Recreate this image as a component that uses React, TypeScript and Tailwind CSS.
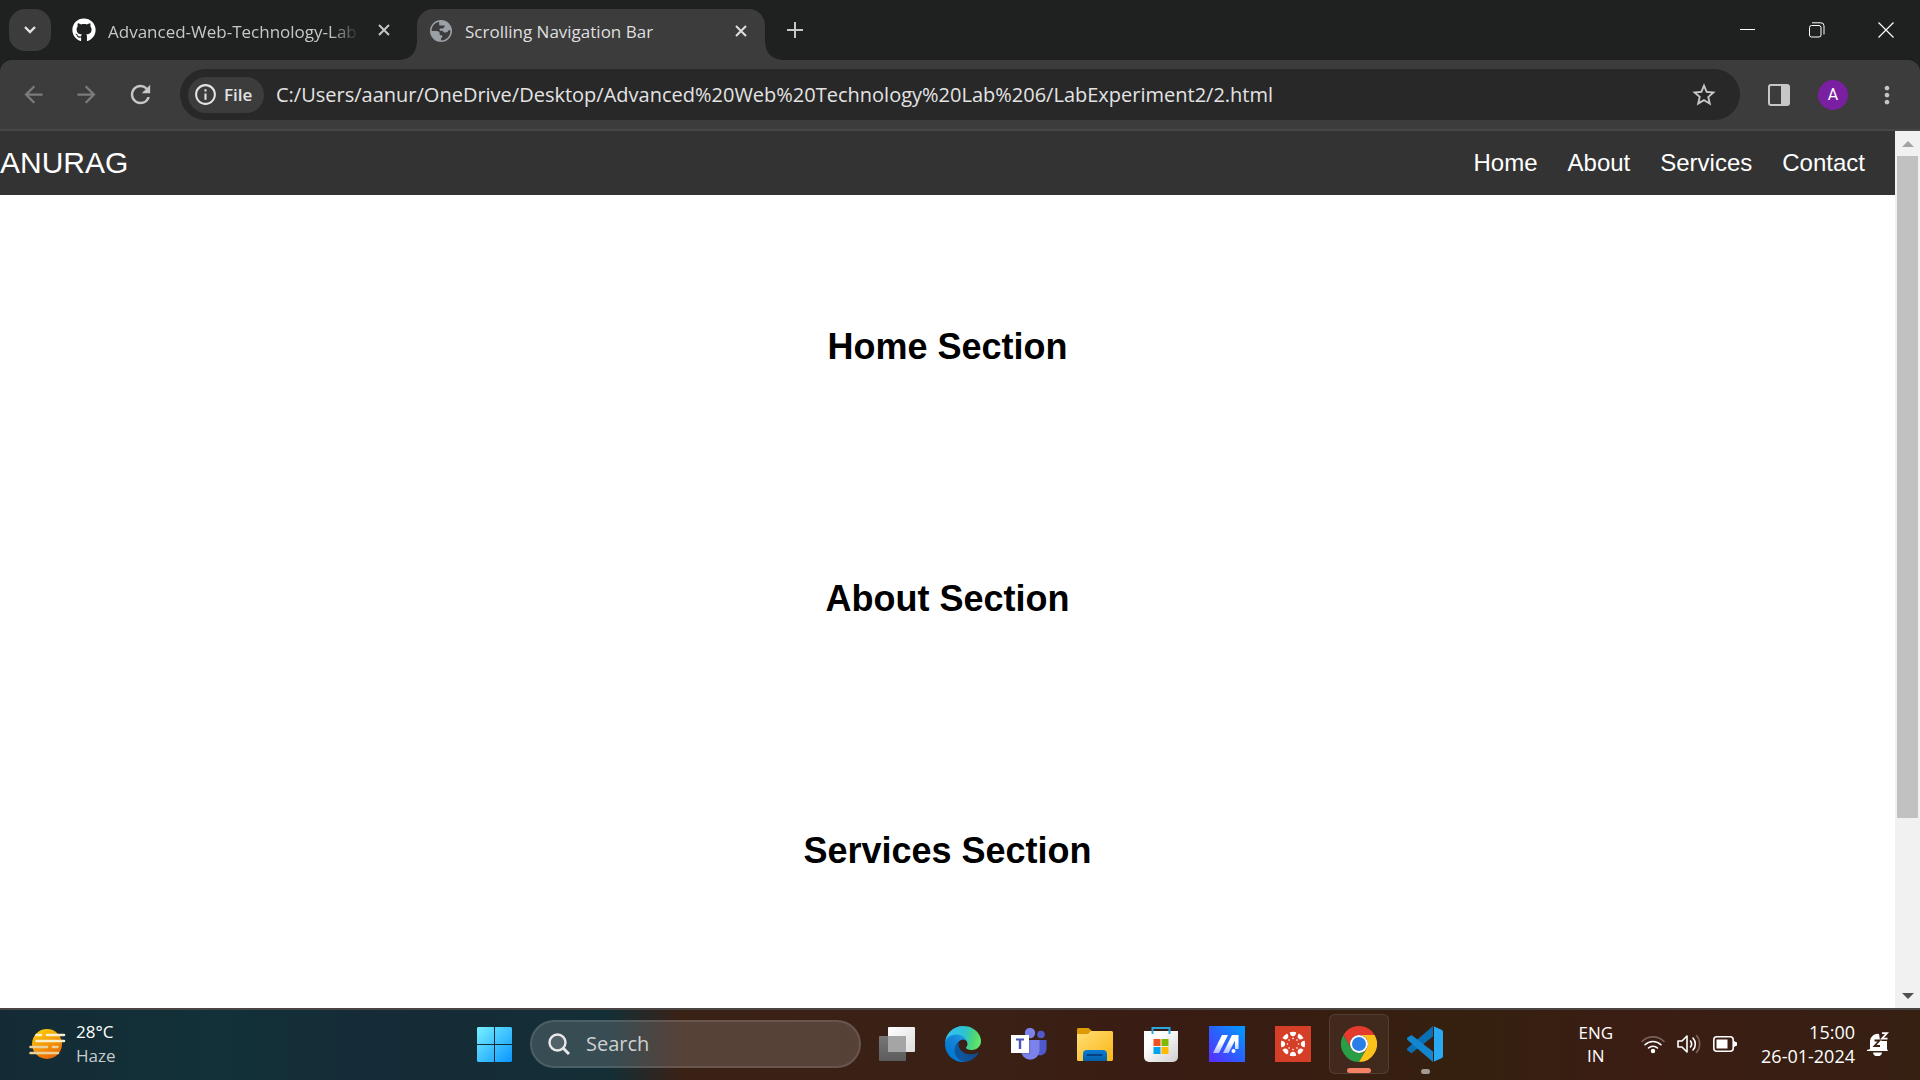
import type { ReactNode } from "react";
import { FaGithub } from "react-icons/fa";
import { MdArrowBack, MdArrowForward, MdRefresh, MdStarOutline, MdInfoOutline, MdMoreVert } from "react-icons/md";

const ui = "font-['Open_Sans','Noto_Sans',sans-serif]";

function Cross({ className }: { className: string }) {
  return (
    <svg viewBox="0 0 12 12" className={className} fill="none" stroke="currentColor" strokeWidth="2">
      <path d="M1 1l10 10M11 1L1 11" />
    </svg>
  );
}

function GlobeIcon() {
  return (
    <svg viewBox="0 0 22 22" className="size-[22px]">
      <circle cx="11" cy="11" r="11" fill="#9aa0a6" />
      <path fill="#3c3c3c" d="M9 1.800C4.700 2.700 1.600 6.500 1.600 11H6.500c2 0 3.200 1 3.200 2.500v1.800h2.600v1.600l-1.300 1.600v1.900c5.200 0 9.400-4.200 9.400-9.400l-.1-.8h-1.800c-.6 1.500-1.400 2.200-2.700 2.200H14l-1.600-1.700H9.700V8.600h3.200L14.500 7V5.400H9.300z" />
    </svg>
  );
}

function TabStrip() {
  return (
    <div className="flex h-[60px] items-end bg-[#1f2120] text-[#c7c7c7]">
      <button aria-label="Search tabs" className="mb-[9px] ml-[9px] flex h-[42px] w-[42px] items-center justify-center rounded-2xl bg-[#3c3c3c]">
        <svg viewBox="0 0 12 8" className="h-2 w-3" fill="none" stroke="#e3e3e3" strokeWidth="2.4">
          <path d="M1 1l5 5 5-5" />
        </svg>
      </button>
      <div className="ml-[21px] flex h-[60px] w-[346px] items-center">
        <FaGithub className="size-6 shrink-0 text-white" />
        <span className="ml-3 mt-1 w-[252px] overflow-hidden whitespace-nowrap text-[17px] [mask-image:linear-gradient(to_right,#000_88%,transparent)]">
          Advanced-Web-Technology-Lab
        </span>
        <button aria-label="Close tab" className="ml-[18px]">
          <Cross className="size-3" />
        </button>
      </div>
      <div className="relative -ml-px flex h-[51px] w-[348px] items-center rounded-t-2xl bg-[#3c3c3c] pl-[13px] pr-[18px] text-[#dfdfdf]">
        <span className="absolute -left-4 bottom-0 size-4 bg-[radial-gradient(circle_at_0_0,transparent_15px,#3c3c3c_16px)]" />
        <span className="absolute -right-4 bottom-0 size-4 bg-[radial-gradient(circle_at_100%_0,transparent_15px,#3c3c3c_16px)]" />
        <div className="-mt-2"><GlobeIcon /></div>
        <span className="-mt-[6px] ml-[13px] flex-1 whitespace-nowrap text-[17px]">Scrolling Navigation Bar</span>
        <button aria-label="Close tab" className="-mt-2">
          <Cross className="size-3" />
        </button>
      </div>
      <button aria-label="New tab" className="mb-[22px] ml-[22px]">
        <svg viewBox="0 0 16 16" className="size-4" stroke="currentColor" strokeWidth="2">
          <path d="M8 0v16M0 8h16" />
        </svg>
      </button>
      <div className="ml-auto flex h-[60px] items-center gap-[53px] pr-[26px] text-white">
        <button aria-label="Minimize">
          <svg viewBox="0 0 16 16" className="size-4" stroke="currentColor"><path d="M0 7.5h15" /></svg>
        </button>
        <button aria-label="Restore">
          <svg viewBox="0 0 16 16" className="size-4" fill="none" stroke="currentColor">
            <rect x=".5" y="3.5" width="11.5" height="11.5" rx="2" />
            <path d="M3 .8h9a3 3 0 013 3v8.6" />
          </svg>
        </button>
        <button aria-label="Close window">
          <svg viewBox="0 0 16 16" className="size-4" stroke="currentColor" strokeWidth="1.2"><path d="M.5.5l15 15M15.500.5l-15 15" /></svg>
        </button>
      </div>
    </div>
  );
}

function Toolbar() {
  return (
    <div className="bg-[#1f2120]">
      <div className="flex h-[71px] items-center rounded-t-xl border-b-2 border-[#474747] bg-[#3c3c3c] text-[#c7c7c7]">
        <div className="flex items-center gap-[26px] pl-5">
          <button aria-label="Back" className="text-[#7b7b7b]"><MdArrowBack className="size-[27px]" /></button>
          <button aria-label="Forward" className="text-[#7b7b7b]"><MdArrowForward className="size-[27px]" /></button>
          <button aria-label="Reload"><MdRefresh className="size-[29px]" /></button>
        </div>
        <div className="ml-[25px] flex h-[51px] flex-1 items-center rounded-full bg-[#282828] pl-2 pr-[22px]">
          <button className="flex h-9 w-[76px] items-center gap-[6px] rounded-full bg-[#3c3c3c] pl-[5px] text-[17px] font-semibold text-[#e3e3e3]">
            <MdInfoOutline className="size-[25px]" />
            File
          </button>
          <input
            aria-label="Address"
            defaultValue="C:/Users/aanur/OneDrive/Desktop/Advanced%20Web%20Technology%20Lab%206/LabExperiment2/2.html"
            className="ml-3 flex-1 bg-transparent text-[20px] text-[#e3e3e3] outline-none"
          />
          <button aria-label="Bookmark this tab"><MdStarOutline className="size-7" /></button>
        </div>
        <button aria-label="Side panel" className="ml-7">
          <svg viewBox="0 0 22 22" className="size-[22px]">
            <rect x="1" y="1" width="20" height="20" rx="2" fill="none" stroke="currentColor" strokeWidth="2" />
            <path d="M13 1h8v20h-8z" fill="currentColor" />
          </svg>
        </button>
        <button aria-label="Profile" className="ml-7 flex size-[30px] items-center justify-center rounded-full bg-[#7b1fa2] font-['Roboto',sans-serif] text-base text-white">
          A
        </button>
        <button aria-label="Menu" className="ml-[25px] mr-[19px]"><MdMoreVert className="size-7" /></button>
      </div>
    </div>
  );
}

function Page() {
  return (
    <div className="flex min-h-0 flex-1 bg-white font-['Liberation_Sans',Arial,sans-serif]">
      <div className="flex-1 overflow-hidden">
        <nav className="flex h-16 items-center justify-between bg-[#333] text-white">
          <div className="pb-[2px] text-[30px]">ANURAG</div>
          <ul className="flex gap-[30px] pr-[30px] text-2xl">
            {["Home", "About", "Services", "Contact"].map((l) => (
              <li key={l}><a href={"#" + l.toLowerCase()}>{l}</a></li>
            ))}
          </ul>
        </nav>
        <main className="pt-[26px]">
          {["Home", "About", "Services"].map((s) => (
            <section key={s} id={s.toLowerCase()} className="flex h-[252px] items-center justify-center">
              <h2 className="text-4xl font-bold text-black">{s} Section</h2>
            </section>
          ))}
        </main>
      </div>
      <div className="flex w-[25px] flex-col bg-[#f1f1f1]">
        <button aria-label="Scroll up" className="flex h-[25px] items-center justify-center">
          <svg viewBox="0 0 12 6" className="h-[6px] w-3"><path d="M6 0l6 6H0z" fill="#a3a3a3" /></svg>
        </button>
        <div className="flex-1 px-[2px]"><div className="h-[80%] bg-[#c1c1c1]" /></div>
        <button aria-label="Scroll down" className="flex h-[25px] items-center justify-center">
          <svg viewBox="0 0 12 6" className="h-[6px] w-3"><path d="M0 0h12L6 6z" fill="#505050" /></svg>
        </button>
      </div>
    </div>
  );
}

function WindowsIcon() {
  return (
    <svg viewBox="0 0 35 35" className="size-[35px]">
      <defs>
        <linearGradient id="win" x1="0" y1="0" x2="35" y2="35" gradientUnits="userSpaceOnUse">
          <stop offset="0" stopColor="#76f0ff" /><stop offset="1" stopColor="#0a96ff" />
        </linearGradient>
      </defs>
      <path fill="url(#win)" d="M1 0h16v17H0V1zM18 0h16l1 1v16H18zM0 18h17v17H1l-1-1zM18 18h17v16l-1 1H18z" />
    </svg>
  );
}

function TaskViewIcon() {
  return (
    <svg viewBox="0 0 36 36" className="size-9">
      <defs>
        <linearGradient id="tv1" x1="0" y1="0" x2="1" y2="1"><stop offset="0" stopColor="#fff" /><stop offset="1" stopColor="#ddd" /></linearGradient>
        <linearGradient id="tv2" x1="0" y1="0" x2="0" y2="1"><stop offset="0" stopColor="#777" /><stop offset="1" stopColor="#5c5c5c" /></linearGradient>
      </defs>
      <rect x="9" y="1" width="27" height="25" rx="1" fill="url(#tv1)" />
      <rect x="0" y="10" width="27" height="25" rx="1" fill="url(#tv2)" />
      <path d="M9 10h18v16H9z" fill="#a5a5a5" />
    </svg>
  );
}

function EdgeIcon() {
  return (
    <svg viewBox="0 0 256 256" className="size-9">
      <defs>
        <linearGradient id="e1" x1="63" y1="177" x2="241" y2="177" gradientUnits="userSpaceOnUse"><stop offset="0" stopColor="#0c59a4" /><stop offset="1" stopColor="#114a8b" /></linearGradient>
        <linearGradient id="e2" x1="157" y1="92" x2="45" y2="220" gradientUnits="userSpaceOnUse"><stop offset="0" stopColor="#1b9de2" /><stop offset=".4" stopColor="#1484d8" /><stop offset="1" stopColor="#0078d4" /></linearGradient>
        <linearGradient id="e3" x1="10" y1="70" x2="250" y2="130" gradientUnits="userSpaceOnUse"><stop offset="0" stopColor="#35c1f1" /><stop offset=".5" stopColor="#2cc3cd" /><stop offset=".8" stopColor="#4fd870" /><stop offset="1" stopColor="#66eb6e" /></linearGradient>
      </defs>
      <path fill="url(#e1)" d="M231 190.500c-3.400 1.800-6.900 3.400-10.500 4.700-11.500 4.300-23.600 6.500-35.900 6.500-47.300 0-88.500-32.500-88.500-74.300.1-11.400 6.400-21.900 16.400-27.300-42.800 1.800-53.800 46.400-53.800 72.500 0 74 68.100 81.400 82.800 81.400 7.900 0 19.800-2.300 27-4.600l1.300-.4c27.600-9.500 51-28.100 66.600-52.800 1.200-1.900.6-4.300-1.200-5.500-1.300-.8-2.900-.9-4.200-.2z" />
      <path fill="url(#e2)" d="M105.700 241.400c-8.900-5.500-16.600-12.800-22.700-21.300-26.300-36-18.400-86.500 17.600-112.800 3.800-2.700 7.700-5.200 11.900-7.200 3.100-1.500 8.400-4.100 15.500-4 10.100.1 19.600 4.900 25.700 13 4 5.400 6.300 11.900 6.400 18.700 0-.2 24.500-79.600-80-79.600C36.200 48.200.1 89.900.1 126.500c-.2 19.300 4 38.500 12.100 56 27.600 58.800 94.800 87.600 156.400 67.100-21.100 6.600-44.100 3.700-62.900-8.200z" />
      <path fill="url(#e3)" d="M152.300 148.900c-.8 1-3.300 2.500-3.300 5.700 0 2.600 1.700 5.100 4.700 7.200 14.400 10 41.500 8.700 41.600 8.700 10.700 0 21.100-2.900 30.300-8.300 18.800-11 30.400-31.200 30.400-53 .3-22.400-8-37.300-11.300-43.900C223.500 23.900 177.700 0 128 0 58 0 1 56.200 0 126.200c.5-36.500 36.800-66 80-66 3.500 0 23.500.3 42 10.100 16.300 8.600 24.900 19 30.800 29.300 6.200 10.700 7.300 24.100 7.300 29.500 0 5.300-2.700 13.300-7.800 19.800z" />
    </svg>
  );
}

function TeamsIcon() {
  return (
    <svg viewBox="0 0 36 36" className="size-9">
      <circle cx="30" cy="8.500" r="3.800" fill="#5059c9" />
      <path d="M25 14h10.500v9a6.500 6.500 0 01-10.500 5z" fill="#5059c9" />
      <circle cx="19" cy="7" r="5.200" fill="#7b83eb" />
      <path d="M10 14h18.500v10.500a9.200 9.200 0 01-18.500 0z" fill="#7b83eb" />
      <path d="M10 14h9v14h-8.300z" fill="#5a62c3" opacity=".6" />
      <path d="M0 9h18v18H0z" fill="#fff" />
      <path d="M5 12.500h8v2h-2.800V23H7.800v-8.500H5z" fill="#4b53bc" />
    </svg>
  );
}

function FolderIcon() {
  return (
    <svg viewBox="0 0 36 36" className="size-9">
      <defs>
        <linearGradient id="f1" x1="0" y1="0" x2="1" y2="1"><stop offset="0" stopColor="#ffde76" /><stop offset="1" stopColor="#fbb613" /></linearGradient>
        <linearGradient id="f2" x1="0" y1="0" x2="0" y2="1"><stop offset="0" stopColor="#0b7cd6" /><stop offset="1" stopColor="#0560a8" /></linearGradient>
      </defs>
      <path d="M0 3l1-1h10.500l3.500 3v5H0z" fill="#dd9a06" />
      <path d="M0 8h11l3-3h21l1 1v28l-1 1H1l-1-1z" fill="url(#f1)" />
      <path d="M6 35v-7a4 4 0 014-4h16a4 4 0 014 4v7z" fill="url(#f2)" />
      <path d="M10.500 29h14" stroke="#04417e" strokeWidth="2" strokeLinecap="round" />
    </svg>
  );
}

function StoreIcon() {
  return (
    <svg viewBox="0 0 36 36" className="size-9">
      <defs><linearGradient id="s1" x1="0" y1="0" x2="1" y2="1"><stop offset=".3" stopColor="#fff" /><stop offset="1" stopColor="#cfcfcf" /></linearGradient></defs>
      <path d="M1 5h34v26a5 5 0 01-5 5H6a5 5 0 01-5-5z" fill="url(#s1)" />
      <path d="M9.500 8V2h17v6" fill="none" stroke="#27a8e0" strokeWidth="2" />
      <path d="M10.500 13h7v7h-7z" fill="#f25022" /><path d="M18.500 13h7v7h-7z" fill="#7fba00" />
      <path d="M10.500 21h7v7h-7z" fill="#00a4ef" /><path d="M18.500 21h7v7h-7z" fill="#ffb900" />
    </svg>
  );
}

function AsusIcon() {
  return (
    <svg viewBox="0 0 36 36" className="size-9">
      <defs>
        <linearGradient id="a1" x1="0" y1="1" x2="1" y2="0"><stop offset="0" stopColor="#5a2bff" /><stop offset=".5" stopColor="#2a62ff" /><stop offset="1" stopColor="#009dff" /></linearGradient>
        <linearGradient id="a2" x1="0" y1="1" x2="0" y2="0"><stop offset="0" stopColor="#fff" stopOpacity=".6" /><stop offset=".6" stopColor="#fff" /></linearGradient>
      </defs>
      <path d="M0 0h36v36H0z" fill="url(#a1)" />
      <path d="M4 27L13 9h6l-9 18zM14 27l9-18h6.500v14h-3.500v-8.500L19.500 27z" fill="url(#a2)" />
      <circle cx="24.500" cy="25" r="2" fill="#fff" />
    </svg>
  );
}

function CanvasIcon() {
  return (
    <svg viewBox="0 0 36 36" className="size-9">
      <path d="M0 0h36v36H0z" fill="#d63f27" />
      {[0, 45, 90, 135, 180, 225, 270, 315].map((a) => (
        <g key={a} transform={`rotate(${a} 18 18)`} fill="#fff">
          <path d="M14.800 6.300a12.200 12.200 0 016.400 0c0 2.400-1.300 3.900-3.200 3.900s-3.200-1.500-3.200-3.900z" />
          <circle cx="18" cy="12.400" r=".8" />
        </g>
      ))}
    </svg>
  );
}

function ChromeIcon() {
  return (
    <svg viewBox="0 0 36 36" className="size-9">
      <path d="M2.400 9A18 18 0 0133.600 9H18a9 9 0 00-7.800 13.500z" fill="#e33b2e" />
      <path d="M2.400 9A18 18 0 0018 36l7.800-13.500a9 9 0 01-15.600 0z" fill="#2a9d47" />
      <path d="M33.600 9A18 18 0 0118 36l7.800-13.500A9 9 0 0018 9z" fill="#fcc21b" />
      <circle cx="18" cy="18" r="9" fill="#fff" /><circle cx="18" cy="18" r="7" fill="#2b7de9" />
    </svg>
  );
}

function CodeIcon() {
  return (
    <svg viewBox="0 0 36 36" className="size-9">
      <path d="M26 10.500L4.500 27.200.5 24.500c-.7-.7-.7-1.700 0-2.400L26 0z" fill="#0a6fb3" />
      <path d="M26 25.500L4.500 8.900.5 11.500c-.7.7-.7 1.700 0 2.400L26 36z" fill="#1287d0" />
      <path d="M26 0l9 4 1 1.500v25L35 32l-9 4c1 0 1-.5 1-1.500v-33C27 .5 26.500 0 26 0z" fill="#2aa9f2" />
    </svg>
  );
}

function AppButton({ label, active, children, bar }: { label: string; active?: boolean; children: ReactNode; bar?: ReactNode }) {
  return (
    <button
      aria-label={label}
      className={`relative flex h-[60px] w-[60px] items-center justify-center rounded-md ${active ? "border border-white/10 bg-white/5" : ""}`}
    >
      {children}
      {bar}
    </button>
  );
}

function Taskbar() {
  return (
    <div className="flex h-[72px] shrink-0 items-center border-t-2 border-[#4a4442] bg-[linear-gradient(90deg,#142b35_0px,#123138_220px,#152b37_380px,#142e36_610px,#3a2116_680px,#3a2015_1000px,#391c13_1160px,#35200f_1480px,#3b1d14_1640px,#362012_1920px)] pb-[2px] text-white">
      <div className="flex flex-1 items-center pl-7">
        <svg viewBox="0 0 38 32" className="h-8 w-[38px]">
          <defs><linearGradient id="sun" x1=".2" y1="0" x2=".7" y2="1"><stop offset="0" stopColor="#ffcf0a" /><stop offset="1" stopColor="#ea6406" /></linearGradient></defs>
          <circle cx="19" cy="16" r="15" fill="url(#sun)" />
          <g strokeWidth="2.600" strokeLinecap="round">
            <path d="M8.500 7H13M19 7h17M8.500 13H36" stroke="#f8efcb" />
            <path d="M2.500 19H19M25 19h4.500M2.500 25H30" stroke="#ecd09a" />
          </g>
        </svg>
        <div className="ml-[10px] text-[17px] leading-6">
          <div>28°C</div>
          <div className="text-[#c6cbcd]">Haze</div>
        </div>
      </div>
      <div className="ml-[2px] flex items-center gap-[6px]">
        <AppButton label="Start"><WindowsIcon /></AppButton>
        <label className="flex h-12 w-[331px] items-center rounded-full border-2 border-white/10 bg-white/15 pl-4">
          <svg viewBox="0 0 22 22" className="size-[22px]" fill="none" stroke="#e8e8e8" strokeWidth="2.400">
            <circle cx="9.500" cy="9.500" r="8" fill="#ffffff22" /><path d="M15.500 15.500l5.500 5.500" strokeWidth="3" />
          </svg>
          <input aria-label="Search" placeholder="Search" className="ml-4 w-60 bg-transparent text-[20px] outline-none placeholder:text-[#d0d0d0]" />
        </label>
        <AppButton label="Task view"><TaskViewIcon /></AppButton>
        <AppButton label="Edge"><EdgeIcon /></AppButton>
        <AppButton label="Teams"><TeamsIcon /></AppButton>
        <AppButton label="File Explorer"><FolderIcon /></AppButton>
        <AppButton label="Store"><StoreIcon /></AppButton>
        <AppButton label="MyASUS"><AsusIcon /></AppButton>
        <AppButton label="Canvas"><CanvasIcon /></AppButton>
        <AppButton label="Chrome" active bar={<span className="absolute bottom-0 h-[5px] w-6 rounded-full bg-[#f48264]" />}><ChromeIcon /></AppButton>
        <AppButton label="Code" bar={<span className="absolute bottom-0 h-[5px] w-[9px] rounded-full bg-[#a39a96]" />}><CodeIcon /></AppButton>
      </div>
      <div className="flex flex-1 items-center justify-end pr-[31px]">
        <div className="text-center text-[17px] leading-[23px]">
          <div>ENG</div>
          <div>IN</div>
        </div>
        <div className="ml-7 flex items-center gap-3">
          <svg viewBox="0 0 24 20" className="h-5 w-6" fill="none" stroke="#fff" strokeWidth="1.600" strokeLinecap="round">
            <path d="M1 7.500a15.500 15.500 0 0122 0" opacity=".3" />
            <path d="M4 10.800a11.300 11.300 0 0116 0M7.500 14a6.500 6.500 0 019 0" />
            <circle cx="12" cy="17" r="1.400" fill="#fff" />
          </svg>
          <svg viewBox="0 0 24 20" className="h-5 w-6" fill="none" stroke="#fff" strokeWidth="1.600" strokeLinecap="round" strokeLinejoin="round">
            <path d="M1 7v6h4l5 5V2L5 7zM13.500 7a5 5 0 010 6M16 4a9 9 0 010 12" />
            <path d="M19.500 1.500a13 13 0 010 17" opacity=".3" />
          </svg>
          <svg viewBox="0 0 24 16" className="h-4 w-6">
            <rect x=".8" y=".8" width="19.400" height="14.400" rx="3" fill="none" stroke="#fff" strokeWidth="1.600" />
            <path d="M3.500 3.500h11v9h-11zM21 5l3 1.500v3L21 11z" fill="#fff" />
          </svg>
        </div>
        <div className="ml-6 text-right text-[18px] leading-6">
          <div>15:00</div>
          <div>26-01-2024</div>
        </div>
        <svg viewBox="0 0 22 24" className="ml-3 h-6 w-[22px]">
          <path d="M3 17V9a7.500 7.500 0 019-7l1 6h7v9l1 2H0v-1z" fill="#fff" />
          <path d="M6 20.500h9a4.500 4 0 01-9 0z" fill="#fff" />
          <path d="M7.500 8.500h5l-5 5.500h5.500" fill="none" stroke="#3a1f14" strokeWidth="1.800" />
          <path d="M12.500 0h9v9h-7z" fill="#3a1f14" />
          <path d="M15 1.200h5l-5 5.500h5.500" fill="none" stroke="#fff" strokeWidth="1.800" />
        </svg>
      </div>
    </div>
  );
}

export default function App() {
  return (
    <div className={`flex h-screen flex-col overflow-hidden bg-white ${ui}`}>
      <TabStrip />
      <Toolbar />
      <Page />
      <Taskbar />
    </div>
  );
}
